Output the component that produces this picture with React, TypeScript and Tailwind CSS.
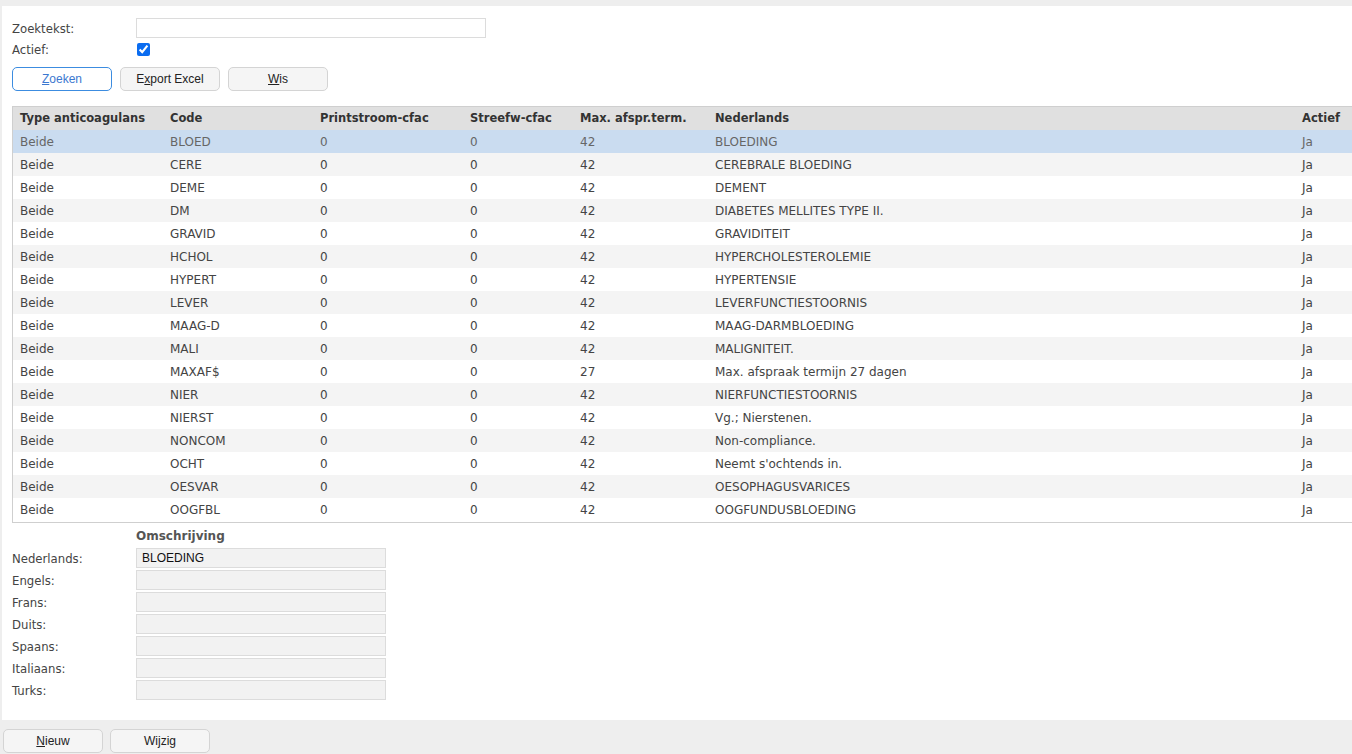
import React from "react";

const rows: [string, string, string][] = [
  ["BLOED", "42", "BLOEDING"],
  ["CERE", "42", "CEREBRALE BLOEDING"],
  ["DEME", "42", "DEMENT"],
  ["DM", "42", "DIABETES MELLITES TYPE II."],
  ["GRAVID", "42", "GRAVIDITEIT"],
  ["HCHOL", "42", "HYPERCHOLESTEROLEMIE"],
  ["HYPERT", "42", "HYPERTENSIE"],
  ["LEVER", "42", "LEVERFUNCTIESTOORNIS"],
  ["MAAG-D", "42", "MAAG-DARMBLOEDING"],
  ["MALI", "42", "MALIGNITEIT."],
  ["MAXAF$", "27", "Max. afspraak termijn 27 dagen"],
  ["NIER", "42", "NIERFUNCTIESTOORNIS"],
  ["NIERST", "42", "Vg.; Nierstenen."],
  ["NONCOM", "42", "Non-compliance."],
  ["OCHT", "42", "Neemt s'ochtends in."],
  ["OESVAR", "42", "OESOPHAGUSVARICES"],
  ["OOGFBL", "42", "OOGFUNDUSBLOEDING"],
];

const talen = ["Nederlands", "Engels", "Frans", "Duits", "Spaans", "Italiaans", "Turks"];

function Knop({ children, blue }: { children: React.ReactNode; blue?: boolean }) {
  return (
    <button
      className={
        blue
          ? "w-[100px] h-[24px] rounded-[5px] border border-[#3c8ce0] bg-white text-[#3c78d0] text-[12px] font-['Liberation_Sans',Arial,sans-serif]"
          : "w-[100px] h-[24px] rounded-[5px] border border-[#d4d4d4] bg-[#f5f5f5] text-[#222] text-[12px] font-['Liberation_Sans',Arial,sans-serif]"
      }
    >
      {children}
    </button>
  );
}

export default function App() {
  return (
    <div className="w-[1352px] h-[754px] bg-[#eeeeee] pt-[6px] flex flex-col font-['DejaVu_Sans',Verdana,sans-serif] text-[12px] text-[#444] overflow-hidden">
      <div className="ml-[2px] bg-white h-[714px] flex flex-col pl-[10px]">
        {/* zoekformulier */}
        <div className="flex items-center mt-[12px] h-[20px]">
          <span className="w-[124px] text-[11.7px] pt-[4px]">Zoektekst:</span>
          <input className="w-[350px] h-[20px] border border-[#dcdcdc] outline-none" />
        </div>
        <div className="flex items-center h-[22px]">
          <span className="w-[125px] text-[11.7px] pt-[3px]">Actief:</span>
          <input type="checkbox" defaultChecked className="w-[13px] h-[13px] accent-[#0a6cf0]" />
        </div>
        <div className="flex gap-[8px] mt-[7px]">
          <Knop blue>
            <u>Z</u>oeken
          </Knop>
          <Knop>
            E<u>x</u>port Excel
          </Knop>
          <Knop>
            <u>W</u>is
          </Knop>
        </div>

        {/* tabel */}
        <div className="mt-[15px] border border-[#cfcfcf] border-r-0 h-[417px] overflow-hidden">
          <table className="w-full border-collapse table-fixed">
            <colgroup>
              <col className="w-[150px]" />
              <col className="w-[150px]" />
              <col className="w-[150px]" />
              <col className="w-[110px]" />
              <col className="w-[135px]" />
              <col className="w-[587px]" />
              <col />
            </colgroup>
            <thead>
              <tr className="bg-[#e0e0e0] h-[23px] text-left text-[#333] text-[11.5px] font-bold">
                <th className="pl-[7px]">Type anticoagulans</th>
                <th className="pl-[7px]">Code</th>
                <th className="pl-[7px]">Printstroom-cfac</th>
                <th className="pl-[7px]">Streefw-cfac</th>
                <th className="pl-[7px]">Max. afspr.term.</th>
                <th className="pl-[7px]">Nederlands</th>
                <th className="pl-[7px]">Actief</th>
              </tr>
            </thead>
            <tbody>
              {rows.map(([code, max, ned], i) => (
                <tr
                  key={code}
                  className={
                    i === 0
                      ? "h-[23px] bg-[#cadcf0] text-[#666]"
                      : i % 2 === 1
                      ? "h-[23px] bg-[#f4f4f4] text-[#444]"
                      : "h-[23px] bg-white text-[#444]"
                  }
                >
                  <td className="pl-[7px]">Beide</td>
                  <td className="pl-[7px]">{code}</td>
                  <td className="pl-[7px]">0</td>
                  <td className="pl-[7px]">0</td>
                  <td className="pl-[7px]">{max}</td>
                  <td className="pl-[7px] whitespace-nowrap">{ned}</td>
                  <td className="pl-[7px]">Ja</td>
                </tr>
              ))}
            </tbody>
          </table>
        </div>

        {/* omschrijving */}
        <div className="ml-[124px] mt-[3px] h-[20px] leading-[20px] font-bold text-[#555]">Omschrijving</div>
        <div className="flex flex-col gap-[2px] mt-[2px]">
          {talen.map((t, i) => (
            <div key={t} className="flex items-center h-[20px]">
              <span className="w-[124px] text-[11.7px] pt-[4px]">{t}:</span>
              <div className="w-[250px] h-[20px] bg-[#f2f2f2] border border-[#dcdcdc] px-[5px] leading-[18px] text-[#111] font-['Liberation_Sans',Arial,sans-serif]">
                {i === 0 ? "BLOEDING" : ""}
              </div>
            </div>
          ))}
        </div>
      </div>

      {/* onderbalk */}
      <div className="flex gap-[7px] pl-[3px] mt-[9px]">
        <Knop>
          <u>N</u>ieuw
        </Knop>
        <Knop>Wijzig</Knop>
      </div>
    </div>
  );
}
